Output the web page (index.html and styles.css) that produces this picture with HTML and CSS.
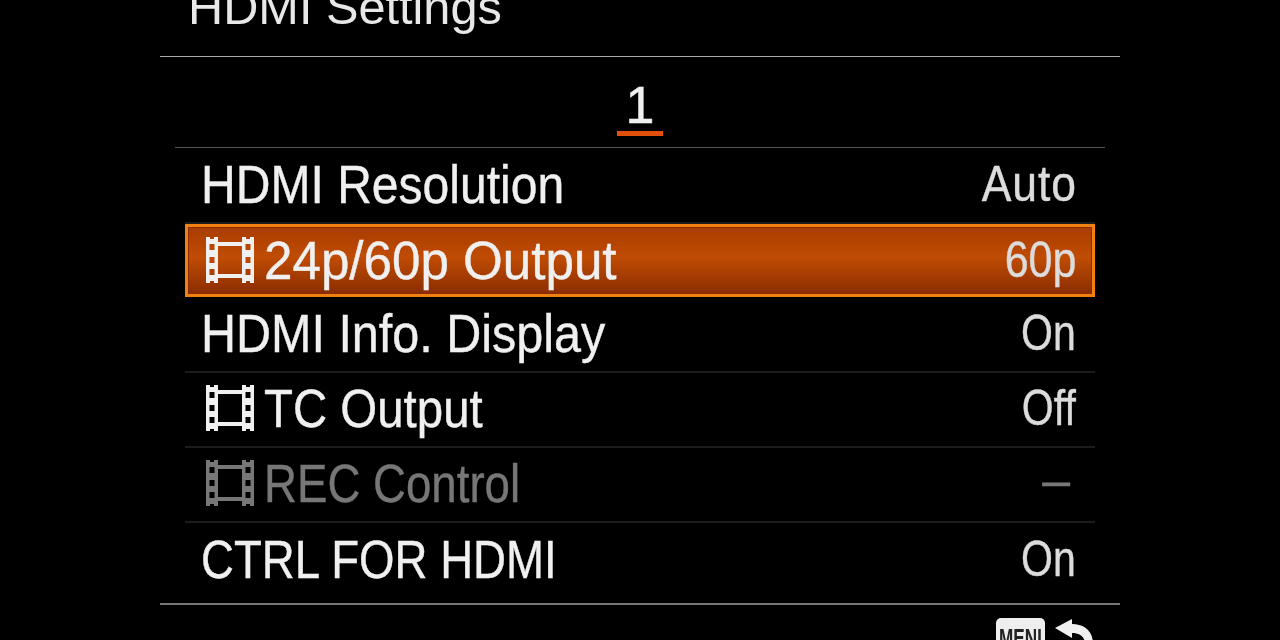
FILE: index.html
```html
<!DOCTYPE html>
<html lang="en">
<head>
    <meta charset="UTF-8">
    <meta name="viewport" content="width=device-width, initial-scale=1.0">
    <title>HDMI Settings</title>
    <link rel="stylesheet" href="styles.css">
</head>
<body>
    <div class="screen">
        <header class="title-bar">
            <h1>HDMI Settings</h1>
        </header>
        <div class="tabs">
            <span class="tab">1</span>
        </div>
        <ul class="menu">
            <li class="row first">
                <span class="label"><span class="text">HDMI Resolution</span></span>
                <span class="value value-wide">Auto</span>
            </li>
            <li class="row selected">
                <span class="label">
                    <svg class="film" viewBox="0 0 48 46"><use href="#film"></use></svg>
                    <span class="text text-wide">24p/60p Output</span>
                </span>
                <span class="value value-mid">60p</span>
            </li>
            <li class="row tall">
                <span class="label"><span class="text text-loose">HDMI Info. Display</span></span>
                <span class="value">On</span>
            </li>
            <li class="row">
                <span class="label">
                    <svg class="film" viewBox="0 0 48 46"><use href="#film"></use></svg>
                    <span class="text text-short">TC Output</span>
                </span>
                <span class="value">Off</span>
            </li>
            <li class="row disabled">
                <span class="label">
                    <svg class="film" viewBox="0 0 48 46"><use href="#film"></use></svg>
                    <span class="text text-tight">REC Control</span>
                </span>
                <span class="value dash">–</span>
            </li>
            <li class="row last">
                <span class="label"><span class="text text-tight">CTRL FOR HDMI</span></span>
                <span class="value">On</span>
            </li>
        </ul>
        <footer class="footer">
            <span class="menu-key"><span class="menu-key-text">MENU</span></span>
            <svg class="back" viewBox="0 0 38 40">
                <path d="M0 10 L17 1 L17 6 C28 6 38 12 38 26 L38 40 L30 40 L30 26 C30 19 25 15 17 15 L17 20 Z"></path>
            </svg>
        </footer>
    </div>

    <svg class="defs" width="0" height="0">
        <symbol id="film" viewBox="0 0 48 46">
            <path fill-rule="evenodd" d="M0 0 H4 V2 H8 V0 H12 V5 H36 V0 H40 V2 H44 V0 H48 V46 H44 V44 H40 V46 H36 V41 H12 V46 H8 V44 H4 V46 H0 Z M3.5 7 V13 H8.5 V7 Z M3.5 20 V26 H8.5 V20 Z M3.5 32 V38 H8.5 V32 Z M39.5 7 V13 H44.5 V7 Z M39.5 20 V26 H44.5 V20 Z M39.5 32 V38 H44.5 V32 Z M12 9 V37 H36 V9 Z"></path>
        </symbol>
    </svg>
</body>
</html>
```

FILE: styles.css
```css
* {
    box-sizing: border-box;
}
html, body {
    margin: 0;
    height: 640px;
    overflow: hidden;
    background: #000;
}
body {
    font-family: "Liberation Sans", Arial, sans-serif;
    color: #f0f0f0;
}
.screen {
    width: 960px;
    height: 640px;
    margin: 0 auto;
    overflow: hidden;
    filter: blur(0.4px);
}
.defs {
    display: none;
}
.title-bar {
    height: 57px;
    border-bottom: 1px solid #aaa;
    display: flex;
    align-items: flex-end;
    padding: 0 0 27px 28px;
}
h1 {
    margin: 0;
    font-size: 48.7px;
    line-height: 44px;
    font-weight: normal;
    color: #e8e8e8;
    white-space: nowrap;
}
.tabs {
    height: 91px;
    margin: 0 15px;
    border-bottom: 1px solid #555;
    display: flex;
    justify-content: center;
}
.tab {
    width: 46px;
    height: 79px;
    padding-top: 22px;
    font-size: 52px;
    line-height: 52px;
    text-align: center;
    border-bottom: 5px solid #e0500a;
    -webkit-text-stroke: 0.5px #f0f0f0;
}
.menu {
    list-style: none;
    margin: 0;
    padding: 0 25px;
}
.row {
    height: 75px;
    display: flex;
    justify-content: space-between;
    align-items: center;
    padding: 0 19px 3px 16px;
    border-bottom: 2px solid #1c1c1c;
    font-size: 54px;
    -webkit-text-stroke: 0.4px currentColor;
}
.first, .tall {
    height: 76px;
}
.label {
    display: flex;
    align-items: center;
    gap: 10px;
    white-space: nowrap;
}
.text {
    display: inline-block;
    transform: scaleX(0.89);
    transform-origin: left center;
}
.text-wide {
    transform: scaleX(0.947);
}
.text-loose {
    transform: scaleX(0.898);
}
.text-short {
    transform: scaleX(0.878);
}
.text-tight {
    transform: scaleX(0.845);
}
.value {
    font-size: 50px;
    color: #dcdcdc;
    transform: scaleX(0.82);
    transform-origin: right center;
}
.value-wide {
    letter-spacing: 1px;
    margin-right: -1px;
    transform: scaleX(0.89);
}
.value-mid {
    transform: scaleX(0.86);
}
.dash {
    font-size: 50px;
    transform: none;
    position: relative;
    top: -3px;
    margin-right: 6px;
}
.film {
    width: 48px;
    height: 46px;
    margin-left: 5px;
    fill: #f0f0f0;
}
.selected {
    height: 73px;
    border: 3px solid #f08010;
    box-shadow: inset 0 0 0 1px #8a2c00;
    background: linear-gradient(#a83c00, #c04c04 45%, #8a2c00);
    padding: 0 16px 2px 13px;
}
.disabled .text, .disabled .value {
    color: #777;
}
.disabled .film {
    fill: #777;
}
.last {
    border-bottom: 0;
}
.footer {
    border-top: 2px solid #777;
    margin-top: 5px;
    padding: 13px 27px 0 0;
    display: flex;
    justify-content: flex-end;
    align-items: flex-start;
    gap: 10px;
}
.menu-key {
    width: 49px;
    height: 40px;
    border-radius: 5px;
    background: #eee;
    color: #222;
    text-align: center;
    padding-top: 7px;
    overflow: hidden;
}
.menu-key-text {
    display: inline-block;
    font-size: 26px;
    line-height: 26px;
    font-weight: bold;
    transform: scaleX(0.66);
    transform-origin: center top;
    margin: 0 -10px;
}
.back {
    width: 38px;
    height: 40px;
    fill: #f0f0f0;
}
```
